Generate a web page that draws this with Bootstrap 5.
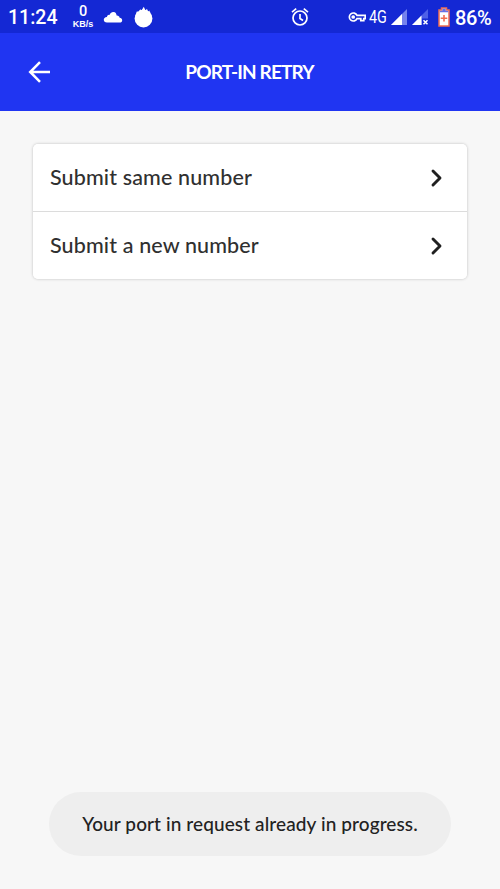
<!DOCTYPE html>
<html lang="en">
<head>
<meta charset="utf-8">
<meta name="viewport" content="width=device-width, initial-scale=1">
<title>Port-in retry</title>
<link href="https://cdn.jsdelivr.net/npm/bootstrap@5.3.0/dist/css/bootstrap.min.css" rel="stylesheet">
<style>
html, body { height: 100%; overflow: hidden; }
body { background: #f7f7f7; font-family: Lato, sans-serif; color: #2d2d2d; }
svg { display: block; flex: none; }
.status-strip { height: 33px; background: #1428d4; color: #fff; font-family: Roboto, sans-serif; padding: 0 9px 0 8px; line-height: 1; }
.clock { font-size: 19.5px; font-weight: 500; width: 64px; padding-top: 2px; }
.speed { width: 22px; margin-right: 9px; }
.speed-value { font-size: 14.5px; font-weight: 500; line-height: 14px; }
.speed-unit { font: 700 9px/10px "Liberation Sans", sans-serif; }
.flame { margin-left: 11px; }
.vpn-key { margin-left: 39px; }
.network { font-size: 18px; width: 18px; margin: 0 4px 0 3px; }
.network span { display: inline-block; transform: scaleX(.8); transform-origin: left; }
.signal-off { margin-left: 5px; }
.battery { margin-left: 9px; }
.charge { font-size: 20px; font-weight: 500; width: 36px; margin-left: 5px; padding-top: 2px; white-space: nowrap; letter-spacing: -.4px; }
.title-bar { height: 78px; background: #2035f2; color: #fff; padding: 0 28px; }
.title-bar h1 { font-size: 19px; font-weight: 700; letter-spacing: -.87px; line-height: 24px; padding-left: 1px; }
.choices { margin: 33px 33px 0; border-radius: 5px; box-shadow: 0 0 3px rgba(0,0,0,.24); }
.choices .list-group-item { height: 67px; padding: 0 24px 0 17px; border: 0; color: #303030; font-size: 21.5px; font-weight: 500; letter-spacing: .13px; }
.choices .list-group-item + .list-group-item { height: 68px; border-top: 1px solid #dcdcdc; }
.notice { width: 402px; height: 64px; margin-bottom: 33px; background: #eee; color: #222; font-size: 19px; font-weight: 500; letter-spacing: .1px; }
</style>
<script src="https://cdn.jsdelivr.net/npm/bootstrap@5.3.0/dist/js/bootstrap.bundle.min.js"></script>
</head>
<body class="d-flex flex-column">
<div class="status-strip d-flex align-items-center flex-shrink-0">
  <div class="clock">11:24</div>
  <div class="speed text-center"><div class="speed-value">0</div><div class="speed-unit">KB/s</div></div>
  <svg width="20" height="12" viewBox="0 0 20 12" fill="#fff"><path d="M4 11.500C1.800 11.500.8 10.300.8 8.800S1.800 6 3.900 5.900C4.300 4.300 5.400 3.600 6.600 3.900 7.500 1.400 9.200.8 10.500 1c2 .2 3 1.600 3.100 3.600 1.600-.2 2.800.8 3 2.200 1.500.1 2.600 1 2.600 2.400s-1 2.300-2.500 2.300z"/></svg>
  <svg class="flame me-auto" width="19" height="22" viewBox="0 0 19 22" fill="#fff"><circle cx="9.500" cy="12.500" r="8.900"/><path d="M1.500 10 3 5l1.300 1.500L6.200 3.200l1.300 1.400L9.800.8l1.700 3.700L13 2.700l1 3 1.500-1.100.5 2.400 1.500 3z"/></svg>
  <svg width="18" height="20" viewBox="0 0 18 20" fill="none" stroke="#fff" stroke-width="1.700"><circle cx="9" cy="11" r="7"/><path d="M1 5.200 5.200 1.700M17 5.200l-4.200-3.500M9 7v4.500l3 2"/></svg>
  <svg class="vpn-key" width="18" height="10" viewBox="0 0 18 10" fill="none" stroke="#fff" stroke-width="1.700"><path d="M9 3.400h8.200v3.200h-1.400v2h-3v-2H9A4 4 0 1 1 9 3.400z"/><circle cx="5.200" cy="5" r="1" fill="#fff"/></svg>
  <div class="network"><span>4G</span></div>
  <svg width="16" height="16" viewBox="0 0 16 16"><path d="M0 16 16 0v16z" fill="#7582ed"/><path d="M0 16 11 5v11z" fill="#fff"/></svg>
  <svg class="signal-off" width="17" height="16" viewBox="0 0 17 16"><path d="M0 16 16 0v9.500h-6V16z" fill="#4e60e8"/><path d="M0 16 9.500 6.500V16z" fill="#fff"/><path d="m11.500 11.200 4 4m0-4-4 4" stroke="#fff" stroke-width="1.500"/></svg>
  <svg class="battery" width="12" height="20" viewBox="0 0 12 20"><path d="M3.500 1h5v2H11v16H1V3h2.500z" fill="#fff" stroke="#f16c50" stroke-width="1.500"/><path d="M4.300 1.800h3.400v2h2.500v1.500H1.800V3.800h2.500z" fill="#6770e4"/><path d="M6 8v6.500M2.700 11.200h6.600" stroke="#f16c50" stroke-width="1.600"/></svg>
  <div class="charge">86%</div>
</div>
<header class="title-bar d-flex align-items-center flex-shrink-0">
  <svg width="22" height="22" viewBox="0 0 22 22" fill="none" stroke="#fff" stroke-width="2.500"><path d="M12 1.200 2.200 11 12 20.800M2.200 11H22"/></svg>
  <h1 class="flex-grow-1 text-center mb-0 me-4">PORT-IN RETRY</h1>
</header>
<main class="flex-grow-1 d-flex flex-column">
  <div class="list-group choices">
    <a href="#" class="list-group-item d-flex align-items-center justify-content-between"><span>Submit same number</span>
      <svg width="13" height="20" viewBox="0 0 13 20" fill="none" stroke="#202020" stroke-width="2.900" stroke-linecap="round" stroke-linejoin="round"><path d="m3 3 7 7-7 7"/></svg></a>
    <a href="#" class="list-group-item d-flex align-items-center justify-content-between"><span>Submit a new number</span>
      <svg width="13" height="20" viewBox="0 0 13 20" fill="none" stroke="#202020" stroke-width="2.900" stroke-linecap="round" stroke-linejoin="round"><path d="m3 3 7 7-7 7"/></svg></a>
  </div>
  <div class="notice rounded-pill mt-auto mx-auto d-flex align-items-center justify-content-center" role="status">Your port in request already in progress.</div>
</main>
</body>
</html>
